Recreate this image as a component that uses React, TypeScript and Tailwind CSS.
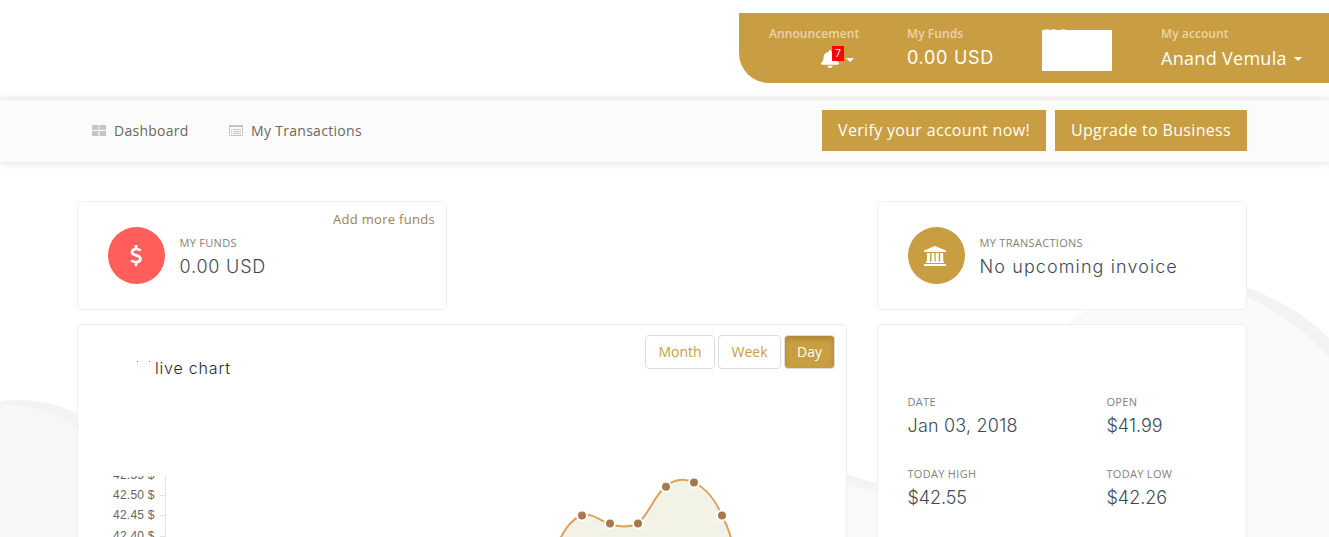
import { FaBell } from "react-icons/fa";

const gold = "bg-[#c99d42]";
const display = "font-['Inter'] font-light text-[#434a54]";
const headerLabel = "text-[12px] font-semibold leading-5 tracking-[.08px] text-[#ead5a6]";

function Caret() {
  return <span className="inline-block border-x-4 border-t-4 border-x-transparent border-t-white" />;
}

function Backdrop() {
  return (
    <svg className="absolute inset-0 -z-10" width="1329" height="537">
      <circle cx="18" cy="536" r="136" fill="#f4f3f1" />
      <circle cx="8" cy="520" r="115" fill="#f7f7f7" />
      <path d="M0 520H123V537H0Z" fill="#f7f7f7" />
      <path d="M847 474.500 Q862 480 877 483 V537 H847Z" fill="#f5f4f2" />
      <path d="M847 484 Q862 489 877 490.500 V537 H847Z" fill="#f9f9f9" />
      <path d="M1240 285 Q1292 302 1329 338 V370 L1240 320Z" fill="#f4f3f1" />
      <path d="M1040 344 Q1090 300 1150 287 Q1210 280 1247 297 Q1288 315 1329 357 V537 H1040Z" fill="#fafaf8" />
    </svg>
  );
}

function BankIcon() {
  return (
    <svg width="22" height="20" fill="#fff">
      <path d="M11 0 22 4.500V6H0V4.500ZM3 7h3v8.500h1.500V7h3v8.500h1.200V7h3v8.500h1.500V7h3v8.500h.8v1.500H2v-1.500h1ZM0 18h22v2H0Z" />
    </svg>
  );
}

function Header() {
  return (
    <header className="flex h-[100px] justify-end pt-[13px]">
      <div className={`${gold} flex h-[70px] w-[590px] rounded-bl-[30px] pl-[30px] pt-[11px] text-white`}>
        <div className="w-[138px]">
          <div className={headerLabel}>Announcement</div>
          <div className="relative flex items-center pl-[52px] pt-[6px]">
            <FaBell className="h-[18px] w-[18px]" preserveAspectRatio="none" />
            <span className="absolute left-[63px] top-[2px] flex h-[15px] w-3 items-center justify-center bg-[#f00] text-[11px]">7</span>
            <span className="ml-[7px] flex pt-px"><Caret /></span>
          </div>
        </div>
        <div className="w-[135px]">
          <div className={headerLabel}>My Funds</div>
          <div className="font-['Inter'] text-[18px] leading-7 tracking-[.7px]">0.00 USD</div>
        </div>
        <div className="relative w-[119px]">
          <div className={headerLabel}>GPG</div>
          <div className="absolute left-0 top-[6px] h-[41px] w-[70px] bg-white" />
        </div>
        <div>
          <div className={headerLabel}>My account</div>
          <div className="flex items-center gap-[7px] text-[18px] leading-[29px] tracking-[.3px]">Anand Vemula <Caret /></div>
        </div>
      </div>
    </header>
  );
}

function Nav() {
  return (
    <nav className="flex h-[62px] items-start bg-[#fbfbfb] pl-[92px] pr-[82px] shadow-[0_0_8px_1px_rgba(80,60,40,0.16)]">
      <a className="flex h-[61px] w-[137px] items-center gap-2 text-[14px] tracking-[.27px] text-[#6b675f]">
        <svg width="14" height="11" fill="#c9c5be">
          <path d="M0 0h6.5v5H0zM7.5 0H14v5H7.500zM0 6h6.500v5H0zM7.500 6H14v5H7.500z" />
        </svg>
        <span className="-mt-px">Dashboard</span>
      </a>
      <a className="flex h-[61px] items-center gap-2 text-[14px] tracking-[.3px] text-[#6b675f]">
        <svg width="14" height="11" fill="none" stroke="#c9c5be">
          <path d="M.5 1v9.500h13V1M0 1.500h14M0 .5h14M2 4.500h1M4 4.500h8M2 6.500h1M4 6.500h8M2 8.500h1M4 8.500h8" />
        </svg>
        <span className="-mt-px">My Transactions</span>
      </a>
      <div className="ml-auto flex gap-[9px] pt-[10px] text-[16px] tracking-[.32px] text-white">
        <button className={`${gold} h-[41px] w-[224px] pb-px`}>Verify your account now!</button>
        <button className={`${gold} h-[41px] w-[192px] pb-px`}>Upgrade to Business</button>
      </div>
    </nav>
  );
}

function Stat({ label, value, track }: { label: string; value: string; track: string }) {
  return (
    <div className="-ml-[.5px]">
      <div className="text-[11px] leading-5 tracking-[.3px] text-[#84817b]">{label}</div>
      <div className={`${display} text-[18px] leading-[27px] ${track}`}>{value}</div>
    </div>
  );
}

const points = [[581.7, 515.5], [609.7, 523.5], [637.7, 523.5], [665.7, 486.7], [693.7, 482.6], [721.7, 515.5]];
const line = "M548 562 C561 537 567 521 581.7 515.5 C591 512 600 521 609.7 523.5 C618 527 628 528 637.7 523.5 C648 516 655 494 665.7 486.7 C674 479 685 478 693.7 482.6 C706 488 716 501 721.7 515.5 C727 524 733 543 737 562";

function Chart() {
  return (
    <svg className="absolute left-0 top-[151px]" width="768" height="62" viewBox="78 476 768 62">
      <g fontFamily="'Liberation Sans', sans-serif" fontSize="12" fill="#666" letterSpacing=".25">
        <text x="113" y="478.500">42.55 $</text>
        <text x="113" y="499">42.50 $</text>
        <text x="113" y="519">42.45 $</text>
        <text x="113" y="540">42.40 $</text>
      </g>
      <path d="M165.500 476V537M160 495.500h5M160 515.500h5M160 536.500h5" stroke="#e2e2e2" fill="none" />
      <path d={line} fill="#f3f2e6" stroke="#dda05a" strokeWidth="2" />
      {points.map(([x, y]) => (
        <circle key={x} cx={x + 0.3} cy={y} r="5" fill="#a9784c" stroke="#fff" strokeWidth="2" />
      ))}
    </svg>
  );
}

export default function App() {
  return (
    <div className="relative isolate h-[537px] w-[1329px] overflow-hidden bg-white font-['Open_Sans',sans-serif]">
      <Backdrop />
      <Header />
      <Nav />
      <main className="grid grid-cols-[370px_370px_370px] grid-rows-[109px_260px] gap-x-[30px] gap-y-[14px] pl-[77px] pt-[39px]">
        <section className="relative flex rounded-[5px] border border-[#eee] bg-white pl-[30px] pt-[25px]">
          <div className="mr-[15px] flex size-[57px] items-center justify-center rounded-full bg-[#ff5e5b] pr-[2px]">
            <svg width="12" height="21" fill="none" stroke="#fff" strokeWidth="2.7">
              <path d="M6 0v4M6 17v4M10.700 5.500C8 3.300 2 3.300 2 7.200c0 4.100 8.500 2.200 8.500 6.500 0 4-6.500 4.400-9.300 1.700" />
            </svg>
          </div>
          <div className="pt-[6px]"><Stat label="MY FUNDS" value="0.00 USD" track="tracking-[.8px]" /></div>
          <a className="absolute right-[11px] top-[7px] text-[13px] leading-5 tracking-[.3px] text-[#a67c58]">Add more funds</a>
        </section>
        <section className="col-start-3 flex rounded-[5px] border border-[#eee] bg-white pl-[30px] pt-[25px]">
          <div className={`${gold} mr-[15px] flex size-[57px] items-center justify-center rounded-full pr-[3px]`}>
            <BankIcon />
          </div>
          <div className="pt-[6px]"><Stat label="MY TRANSACTIONS" value="No upcoming invoice" track="tracking-[1.1px]" /></div>
        </section>
        <section className="relative col-span-2 rounded-[5px] border border-[#eee] bg-white">
          <div className="flex justify-end gap-[3px] pr-[11px] pt-[10px] text-[14px] text-[#c99d42]">
            <button className="h-[34px] w-[70px] rounded border border-[#ddd] bg-white pb-[2px]">Month</button>
            <button className="h-[34px] w-[63px] rounded border border-[#ddd] bg-white pb-[2px]">Week</button>
            <button className={`${gold} h-[34px] w-[51px] rounded border border-[#ddd] pb-[2px] text-white shadow-[inset_0_3px_5px_rgba(0,0,0,0.15)]`}>Day</button>
          </div>
          <h2 className="-mt-[12px] pl-[77px] font-['Inter'] text-[16px] font-light leading-[22px] tracking-[.8px] text-[#252a30]">live chart</h2>
          <span className="absolute left-[59px] top-[36px] h-px w-px bg-[#777]" />
          <span className="absolute left-[71px] top-[36px] h-px w-px bg-[#777]" />
          <Chart />
        </section>
        <section className="grid grid-cols-[199px_1fr] grid-rows-[72px_72px] rounded-[5px] border border-[#eee] bg-white pl-[30px] pt-[67px]">
          <Stat label="DATE" value="Jan 03, 2018" track="tracking-[.2px]" />
          <Stat label="OPEN" value="$41.99" track="tracking-[0px]" />
          <Stat label="TODAY HIGH" value="$42.55" track="tracking-[-.1px]" />
          <Stat label="TODAY LOW" value="$42.26" track="tracking-[0px]" />
        </section>
      </main>
    </div>
  );
}
